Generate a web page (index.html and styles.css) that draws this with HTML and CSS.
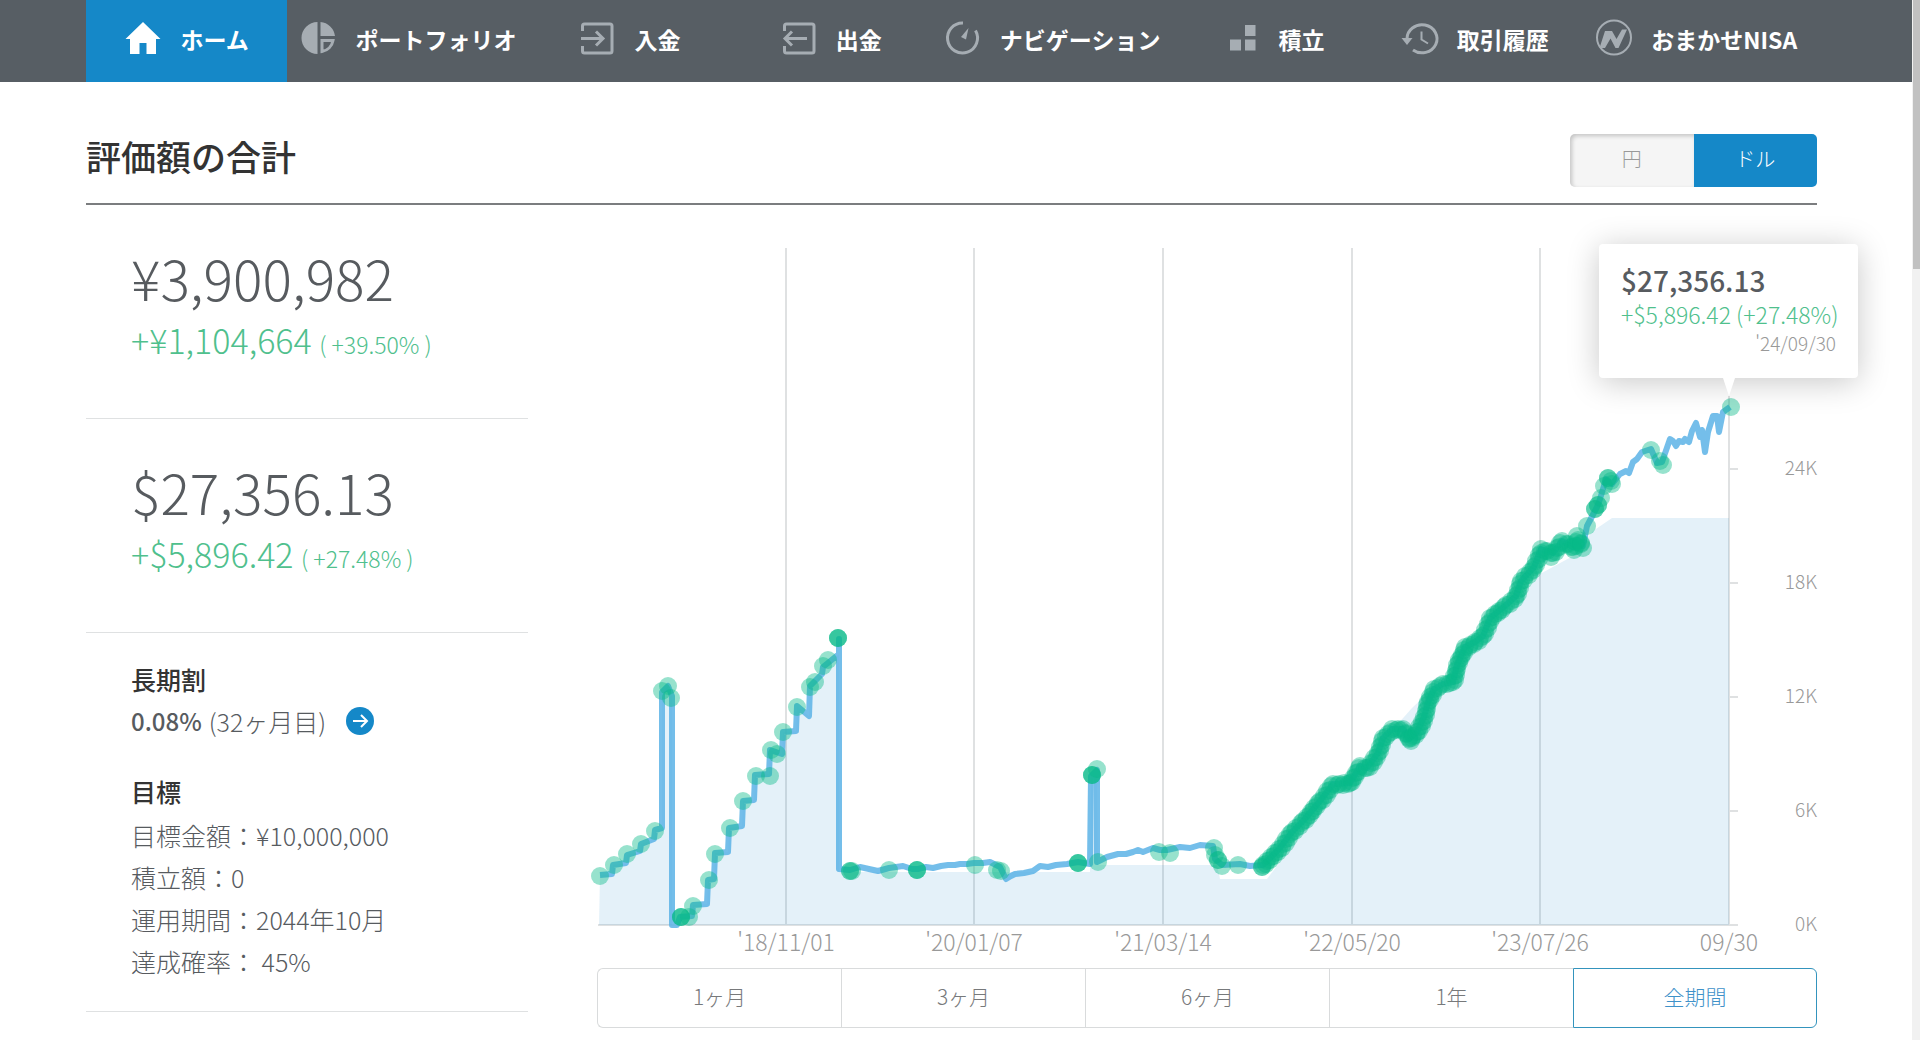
FILE: index.html
```html
<!DOCTYPE html>
<html lang="ja">
<head>
<meta charset="utf-8">
<meta name="viewport" content="width=device-width, initial-scale=1">
<title>ホーム</title>
<link rel="stylesheet" href="styles.css">
</head>
<body>
<div class="page">
  <header class="topbar">
    <nav class="nav" aria-label="メイン">
      <a class="nav-item nav-item-active" href="#home">
        <svg class="nav-icon" viewBox="0 0 34 34"><path d="M17 1 34.500 18H30V33H20.500V22H13.500V33H4V18H-.5Z"/></svg>ホーム</a>
      <a class="nav-item" href="#portfolio">
        <svg class="nav-icon" viewBox="0 0 34 34"><path d="M15.500 1V33A16 16 0 0 1 15.500 1ZM18.500 1A16 16 0 0 1 33 15H18.500Z"/><path class="stroke" d="M20 19.500H31A13.500 13.500 0 0 1 20 30.500Z"/></svg>ポートフォリオ</a>
      <a class="nav-item" href="#deposit">
        <svg class="nav-icon" viewBox="0 0 34 34"><path class="stroke" d="M2.500 10V5Q2.500 3 4.500 3H30Q32 3 32 5V30Q32 32 30 32H4.500Q2.500 32 2.500 30V25M1 17.500H22M16 10.500 23 17.500 16 24.500"/></svg>入金</a>
      <a class="nav-item" href="#withdraw">
        <svg class="nav-icon" viewBox="0 0 34 34"><path class="stroke" d="M2.500 10V5Q2.500 3 4.500 3H30Q32 3 32 5V30Q32 32 30 32H4.500Q2.500 32 2.500 30V25M25 17.500H4M10 10.500 3 17.500 10 24.500"/></svg>出金</a>
      <a class="nav-item" href="#navigation">
        <svg class="nav-icon" viewBox="0 0 34 34"><path class="stroke" d="M17 2A15 15 0 1 0 29.500 9.500"/><path d="M22.500 7 15 16 20 18.500Z"/></svg>ナビゲーション</a>
      <a class="nav-item" href="#saving">
        <svg class="nav-icon" viewBox="0 0 34 34"><path d="M20 4H30.500V15H20ZM5 18.500H16V29.500H5ZM20 18.500H30.500V29.500H20Z"/></svg>積立</a>
      <a class="nav-item" href="#history">
        <svg class="nav-icon" viewBox="0 0 34 34"><path class="stroke" d="M4 18A15 14 0 1 1 10 29"/><path d="M-1.500 17H9.500L4 24Z"/><path class="stroke thin" d="M18.500 10.500V18.500L25 22.500"/></svg>取引履歴</a>
      <a class="nav-item" href="#nisa">
        <svg class="nav-icon" viewBox="0 0 34 34"><circle class="stroke thin" cx="17" cy="16.500" r="17"/><path d="M8 10H15L19.500 18 25 8.500H30L21.500 27H18.500L13.500 17.500 8 27H2.500Z"/></svg>おまかせNISA</a>
    </nav>
  </header>

  <main class="content">
    <div class="title-row">
      <h1 class="title">評価額の合計</h1>
      <div class="currency" role="group" aria-label="通貨">
        <button class="currency-button" type="button">円</button>
        <button class="currency-button currency-button-active" type="button">ドル</button>
      </div>
    </div>

    <div class="columns">
      <div class="summary">
        <section class="card">
          <p class="amount">¥3,900,982</p>
          <p class="gain">+¥1,104,664 <small class="rate">( +39.50% )</small></p>
        </section>
        <section class="card">
          <p class="amount">$27,356.13</p>
          <p class="gain">+$5,896.42 <small class="rate">( +27.48% )</small></p>
        </section>
        <section class="card card-detail">
          <h2 class="detail-title">長期割</h2>
          <p class="detail"><b class="fee">0.08%</b> (32ヶ月目)
            <a class="more" href="#discount" aria-label="長期割の詳細"><svg viewBox="0 0 28 28" width="28" height="28"><circle cx="14" cy="14" r="14"/><path d="M7 14H21M15 8 21 14 15 20"/></svg></a></p>
          <h2 class="detail-title goal-title">目標</h2>
          <ul class="goals">
            <li>目標金額：¥10,000,000</li>
            <li>積立額：0</li>
            <li>運用期間：2044年10月</li>
            <li>達成確率： 45%</li>
          </ul>
        </section>
      </div>

      <div class="history">
        <figure class="chart">
          <svg class="chart-svg" id="chart" viewBox="597 224 1220 745" role="img" aria-label="評価額の推移"></svg>
          <figcaption class="tip">
            <strong class="tip-amount">$27,356.13</strong>
            <span class="tip-gain">+$5,896.42 (+27.48%)</span>
            <time class="tip-date" datetime="2024-09-30">'24/09/30</time>
          </figcaption>
        </figure>
        <div class="ranges" role="group" aria-label="期間">
          <button class="range" type="button">1ヶ月</button>
          <button class="range" type="button">3ヶ月</button>
          <button class="range" type="button">6ヶ月</button>
          <button class="range" type="button">1年</button>
          <button class="range range-active" type="button">全期間</button>
        </div>
      </div>
    </div>
  </main>
</div>
<div class="scroll" aria-hidden="true"><div class="scroll-thumb"></div></div>
<script src="chart.js"></script>
</body>
</html>
```
FILE: styles.css
```css
* {
  box-sizing: border-box;
}

body {
  margin: 0;
  display: flex;
  min-height: 100vh;
  background: #fff;
  color: #575b5f;
  font-family: "Noto Sans CJK JP", "Noto Sans", sans-serif;
  font-weight: 300;
}

h1, h2, p, ul, figure {
  margin: 0;
  padding: 0;
}

button {
  font: inherit;
  cursor: pointer;
}

.page {
  flex: 1;
  min-width: 0;
}

/* Top navigation */
.topbar {
  padding: 0 95px 0 86px;
  background: #575e64;
}

.nav {
  display: grid;
  grid-template-columns: 5fr 6fr 5fr 5fr 6fr 5fr 5fr 6fr;
  height: 82px;
}

.nav-item {
  display: flex;
  align-items: center;
  justify-content: center;
  gap: 20px;
  padding: 0 0 4px 2px;
  color: #fff;
  font-size: 23px;
  font-weight: 700;
  white-space: nowrap;
  text-decoration: none;
}

.nav-item-active {
  background: #1588c8;
}

.nav-icon {
  flex: none;
  width: 34px;
  height: 34px;
  margin-bottom: 2px;
  overflow: visible;
  fill: #a6adb3;
}

.nav-item-active .nav-icon {
  fill: #fff;
}

.stroke {
  fill: none;
  stroke: #a6adb3;
  stroke-width: 3;
}

.thin {
  stroke-width: 2;
}

/* Page heading */
.content {
  padding: 52px 95px 0 86px;
}

.title-row {
  display: flex;
  align-items: flex-start;
  justify-content: space-between;
  padding-bottom: 16px;
  border-bottom: 2px solid #7b7d7f;
}

.title {
  color: #333;
  font-size: 35px;
  font-weight: 500;
  line-height: 44px;
}

.currency {
  display: flex;
  width: 247px;
  height: 53px;
}

.currency-button {
  flex: 1;
  padding: 0 0 4px;
  border: 0;
  border-radius: 5px 0 0 5px;
  background: #f5f5f5;
  box-shadow: inset 2px 2px 4px rgba(0, 0, 0, .2);
  color: #999;
  font-size: 20px;
}

.currency-button-active {
  border-radius: 0 5px 5px 0;
  background: #1588c8;
  box-shadow: none;
  color: #fff;
}

.columns {
  display: grid;
  grid-template-columns: 442px 1fr;
  gap: 69px;
  align-items: start;
}

/* Left column */
.card {
  height: 214px;
  padding: 36px 0 0 45px;
  border-bottom: 1px solid #dfe1e2;
}

.amount {
  font-size: 55px;
  line-height: 72px;
}

.gain {
  color: #4fc08d;
  font-size: 34px;
  line-height: 54px;
}

.rate {
  font-size: 23px;
}

.card-detail {
  height: auto;
  padding: 25px 0 29px 45px;
  font-size: 25px;
  line-height: 42px;
}

.detail-title {
  color: #333;
  font-size: 25px;
  font-weight: 500;
}

.detail {
  display: flex;
  align-items: center;
  gap: 7px;
}

.fee {
  font-size: 24px;
  font-weight: 500;
}

.more {
  display: flex;
  margin-left: 13px;
}

.more circle {
  fill: #1588c8;
}

.more path {
  fill: none;
  stroke: #fff;
  stroke-width: 2;
}

.goal-title {
  margin-top: 28px;
}

.goals {
  margin-top: 2px;
  list-style: none;
}

/* Chart */
.chart {
  position: relative;
  margin-top: 18px;
}

.chart-svg {
  display: block;
  width: 100%;
  height: auto;
  overflow: visible;
}

.grid-line {
  stroke: #dfe1e2;
  stroke-width: 2;
}

.area {
  fill: #1580cc;
  fill-opacity: .115;
}

.series {
  fill: none;
  stroke: #5cb3e6;
  stroke-opacity: .85;
  stroke-width: 6;
  stroke-linejoin: round;
}

.trade {
  fill: #07b989;
  fill-opacity: .42;
}

.axis-x,
.axis-y {
  fill: #999;
  font-size: 23px;
  text-anchor: middle;
}

.axis-y {
  font-size: 19px;
  text-anchor: end;
}

.tip {
  position: absolute;
  top: 21px;
  right: -41px;
  display: flex;
  flex-direction: column;
  width: 259px;
  height: 134px;
  padding: 18px 22px;
  border-radius: 4px;
  background: #fff;
  box-shadow: 0 4px 32px rgba(0, 0, 0, .22);
  white-space: nowrap;
}

.tip::after {
  content: "";
  position: absolute;
  top: 100%;
  right: 123px;
  border: 6px solid transparent;
  border-top: 18px solid #fff;
  border-bottom: 0;
}

.tip-amount {
  font-size: 28px;
  font-weight: 500;
  line-height: 36px;
}

.tip-gain {
  color: #4fc08d;
  font-size: 23px;
  line-height: 32px;
}

.tip-date {
  align-self: flex-end;
  color: #999;
  font-size: 19px;
  line-height: 26px;
}

/* Period selector */
.ranges {
  display: grid;
  grid-template-columns: repeat(5, 1fr);
}

.range {
  height: 60px;
  padding: 0 0 4px;
  border: 1px solid #d9dbdc;
  border-right: 0;
  background: #fff;
  color: #77797b;
  font-size: 21px;
}

.range:first-child {
  border-radius: 6px 0 0 6px;
}

.range-active {
  border: 1px solid #3494bd;
  border-radius: 0 6px 6px 0;
  color: #3f92c9;
}

/* Scroll track */
.scroll {
  width: 8px;
  padding-left: 1px;
  background: #f1f1f1;
}

.scroll-thumb {
  height: 269px;
  background: #c1c1c1;
}
```
FILE: chart.js
```js
const NS = "http://www.w3.org/2000/svg";
const chart = document.getElementById("chart");
const LEFT = 598, RIGHT = 1729, TOP = 249, BASE = 926;

function add(name, attrs, text) {
  const el = document.createElementNS(NS, name);
  for (const key in attrs) el.setAttribute(key, attrs[key]);
  if (text) el.textContent = text;
  chart.appendChild(el);
}

const join = (points) => points.map((p) => p.join(",")).join(" ");

// Valuation, with the jumps made by each deposit and withdrawal
const early = [
  [600, 876], [612, 875], [613, 866], [626, 864], [627, 856], [640, 852], [641, 845],
  [654, 840], [655, 831], [662, 829], [662, 693], [668, 687], [672, 697], [672, 926],
  [677, 926], [680, 918], [692, 917], [693, 906], [707, 905], [708, 881], [714, 880],
  [715, 854], [728, 853], [729, 829], [742, 827], [743, 802], [754, 801], [755, 776],
  [769, 775], [770, 751], [782, 755], [783, 733], [796, 732], [797, 707], [809, 717],
  [810, 687], [822, 675], [823, 668], [839, 655], [839, 640], [839, 870]
];
const flat = [
  [850, 871], [860, 868], [869, 870], [878, 872], [889, 869], [903, 867], [912, 870],
  [918, 870], [926, 868], [933, 869], [941, 867], [948, 866], [955, 866], [960, 865],
  [967, 865], [974, 864], [983, 864], [990, 863], [1000, 868], [1006, 880], [1011, 877],
  [1015, 875], [1024, 874], [1033, 872], [1040, 867], [1048, 868], [1056, 866],
  [1067, 865], [1078, 863], [1090, 865], [1091, 777], [1097, 771], [1097, 863],
  [1107, 858], [1118, 855], [1126, 855], [1133, 853], [1138, 851], [1143, 853],
  [1153, 849], [1160, 851], [1167, 851], [1180, 848], [1190, 849], [1200, 846],
  [1213, 847], [1215, 860], [1222, 866], [1240, 865], [1250, 867]
];
const climb = [
  [1263, 866], [1279, 850], [1292, 833], [1303, 822], [1320, 802], [1333, 785],
  [1350, 784], [1360, 767], [1367, 769], [1378, 754], [1383, 739], [1392, 730],
  [1403, 730], [1409, 740], [1417, 733], [1424, 718], [1428, 703], [1434, 690],
  [1443, 685], [1453, 683], [1457, 666], [1465, 648], [1475, 643], [1483, 637],
  [1490, 619], [1506, 606], [1516, 597], [1521, 582], [1534, 568], [1541, 550],
  [1553, 554], [1562, 542], [1573, 548], [1578, 541], [1583, 547]
];
const recent = [
  [1587, 527], [1597, 508], [1600, 500], [1606, 480], [1612, 485], [1620, 475],
  [1626, 472], [1629, 474], [1633, 463], [1637, 460], [1642, 453], [1651, 450],
  [1657, 464], [1662, 463], [1670, 440], [1673, 442], [1676, 447], [1679, 442],
  [1683, 443], [1685, 440], [1689, 443], [1692, 432], [1696, 424], [1700, 438],
  [1702, 431], [1705, 453], [1708, 433], [1713, 417], [1717, 417], [1719, 433],
  [1723, 413], [1730, 408]
];

// Months between labels, and the value scale
const months = ["'18/11/01", "'20/01/07", "'21/03/14", "'22/05/20", "'23/07/26", "09/30"];
months.forEach((label, i) => {
  const x = Math.round(RIGHT - (5 - i) * 188.7);
  add("line", { class: "grid-line", x1: x, x2: x, y1: i === 5 ? 397 : TOP, y2: BASE });
  add("text", { class: "axis-x", x, y: 952 }, label);
});
["0K", "6K", "12K", "18K", "24K"].forEach((label, i) => {
  const y = BASE - i * 114;
  add("line", { class: "grid-line", x1: RIGHT, x2: RIGHT + 9, y1: y, y2: y });
  add("text", { class: "axis-y", x: 1817, y: y + 6 }, label);
});
add("line", { class: "grid-line", x1: LEFT, x2: RIGHT, y1: BASE, y2: BASE });

// Net deposits
const deposits = [
  [LEFT + 1, BASE], ...early.map(([x, y]) => [x, Math.min(y, BASE)]), [839, 873], [990, 873],
  [1090, 873], [1091, 777], [1097, 777], [1098, 866], [1217, 866], [1220, 880], [1267, 880],
  [1300, 836], [1335, 792], [1380, 745], [1412, 709], [1480, 645], [1540, 575],
  [1573, 557], [1593, 532], [1612, 519], [RIGHT, 519], [RIGHT, BASE]
];
add("polygon", { class: "area", points: join(deposits) });
add("polyline", { class: "series", points: join([...early, ...flat, ...climb, ...recent]) });

// Trades: x, y, number made on that day
const trades = [
  [600, 877, 1], [614, 866, 1], [627, 855, 1], [641, 845, 1], [655, 832, 1], [662, 692, 1],
  [668, 687, 1], [671, 699, 1], [681, 918, 3], [689, 918, 1], [693, 907, 1],
  [709, 881, 1], [715, 855, 1], [730, 829, 1], [743, 802, 1], [756, 777, 1], [770, 777, 1],
  [771, 751, 1], [777, 755, 1], [783, 733, 1], [797, 708, 1], [810, 688, 1], [815, 683, 1],
  [823, 667, 1], [828, 661, 1], [838, 639, 3], [850, 872, 2], [852, 872, 1], [889, 871, 1],
  [917, 871, 3], [975, 866, 1], [997, 871, 1], [1001, 872, 1], [1078, 864, 3],
  [1092, 776, 3], [1097, 770, 1], [1098, 863, 1], [1159, 853, 1], [1170, 854, 1],
  [1214, 849, 1], [1215, 856, 1], [1218, 861, 2], [1222, 867, 1], [1238, 866, 1],
  [1262, 868, 2], [1587, 527, 1], [1595, 510, 2], [1598, 506, 2], [1601, 499, 1],
  [1604, 487, 1], [1608, 479, 2], [1611, 482, 1], [1612, 485, 1], [1651, 451, 1],
  [1660, 462, 1], [1663, 466, 1], [1731, 408, 1], [1574, 551, 1], [1583, 549, 1],
  [1551, 558, 1], [1411, 742, 1], [1577, 537, 1]
];
// Automatic purchases follow the climb at an even pace
for (let i = 1; i < climb.length; i++) {
  const [x0, y0] = climb[i - 1], [x1, y1] = climb[i];
  const steps = Math.max(2, Math.round(Math.hypot(x1 - x0, y1 - y0) / 3));
  for (let s = 0; s < steps; s++) {
    const t = s / steps, shift = s % 2;
    trades.push([Math.round(x0 + (x1 - x0) * t) + shift, Math.round(y0 + (y1 - y0) * t) + shift, 1]);
  }
}
for (const [cx, cy, count] of trades) {
  for (let n = 0; n < count; n++) add("circle", { class: "trade", cx, cy, r: 9 });
}
```
